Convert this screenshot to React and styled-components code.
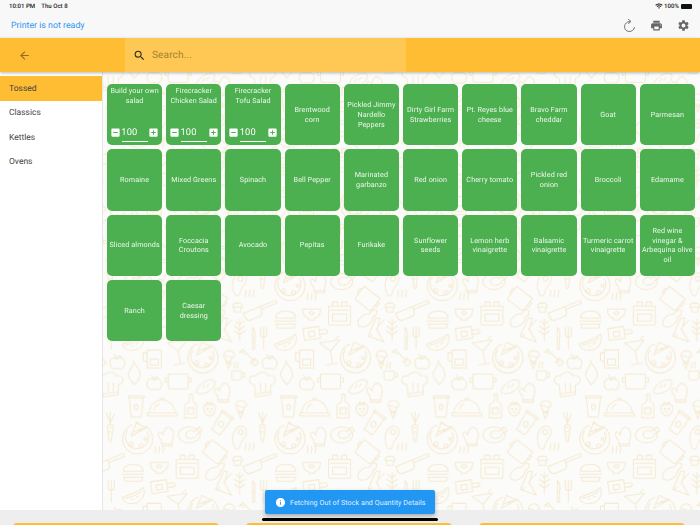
import React from "react";
import styled, { createGlobalStyle } from "styled-components";
import { MdPrint, MdSettings, MdSearch, MdArrowBack, MdInfo, MdWifi, MdIndeterminateCheckBox, MdAddBox } from "react-icons/md";

const Global = createGlobalStyle`
  html, body { margin: 0; padding: 0; background: #fff; }
  * { box-sizing: border-box; }
  body { font-family: Roboto, "Noto Sans", sans-serif; text-rendering: geometricPrecision; }
`;

const Page = styled.div`
  position: relative; width: 700px; height: 525px; overflow: hidden;
  display: flex; flex-direction: column; background: #fff;
`;
const Header = styled.header`
  background: #f8f8f8; height: 38px; display: flex; flex-direction: column;
`;
const StatusBar = styled.div`
  height: 13px; display: flex; align-items: center; justify-content: space-between;
  padding: 0 8px 1px 9px; font-size: 6.1px; font-weight: 500; color: #222;
`;
const StatusGroup = styled.div`
  display: flex; align-items: center; gap: ${p => p.$gap || 6}px;
`;
const Battery = styled.span`
  display: block; width: 11px; height: 5px; background: #111; border-radius: 1px; margin-left: 1px;
`;
const TitleRow = styled.div`
  flex: 1; display: flex; align-items: center; justify-content: space-between; padding: 0 10px 0 11px;
`;
const PrinterStatus = styled.span`
  font-size: 8.8px; color: #2f96f3;
`;
const ActionGroup = styled.div`
  display: flex; align-items: center; gap: 14px; color: #666;
`;
const Toolbar = styled.div`
  position: relative; z-index: 3; height: 34px; background: #ffbd33; display: flex; align-items: stretch;
  box-shadow: 0 1px 3px rgba(0,0,0,.28);
`;
const BackSlot = styled.div`
  width: 125px; padding-left: 18px; display: flex; align-items: center; color: #8f6d22;
`;
const SearchBox = styled.div`
  width: 281px; background: #ffc854; display: flex; align-items: center; padding-left: 8px; gap: 6px;
  color: #2e2a20;
`;
const Placeholder = styled.span`
  font-size: 10.1px; letter-spacing: .1px; color: #a4842f;
`;
const Body = styled.div`
  flex: 1; display: flex; min-height: 0;
`;
const Sidebar = styled.nav`
  width: 103px; background: #fff; border-right: 1px solid #e6e6e6; padding-top: 4px;
  display: flex; flex-direction: column;
`;
const NavItem = styled.div`
  height: 24.5px; display: flex; align-items: center; padding: 1px 0 0 9px; font-size: 8.5px;
  color: #444; background: ${p => (p.$active ? "#ffbd33" : "transparent")};
`;
const Content = styled.main`
  position: relative; flex: 1; background: #fbfbf9; padding: 12px 5px 0 4px; overflow: hidden;
`;
const PatternLayer = styled.svg`
  position: absolute; inset: 0; width: 100%; height: 100%;
`;
const Grid = styled.div`
  position: relative; display: grid; grid-template-columns: repeat(10, 1fr);
  grid-auto-rows: 61.3px; gap: 4px; will-change: transform;
`;
const Card = styled.div`
  background: #4caf50; border-radius: 5px; color: rgba(255,255,255,.9);
  font-size: 7.2px; line-height: 9.7px; letter-spacing: .1px; text-align: center;
  padding: ${p => (p.$qty ? "2px 1.85px 3px" : "0 1.85px")};
  display: flex; flex-direction: column; align-items: center;
  justify-content: ${p => (p.$qty ? "flex-start" : "center")};
`;
const QtyRow = styled.div`
  margin-top: auto; width: 100%; display: flex; align-items: center; padding: 0 1px; color: #fff;
`;
const QtyValue = styled.span`
  flex: 1; text-align: left; font-size: 9.3px; line-height: 11px; padding-left: .5px;
`;
const QtyLine = styled.div`
  width: 26px; height: 1px; background: #fff; margin: 3px 0 0 0;
`;
const Footer = styled.footer`
  height: 15px; background: #eeeeee; display: flex; justify-content: space-between; padding: 13px 15px 0 13px;
  overflow: hidden;
`;
const FooterButton = styled.div`
  width: 206px; height: 8px; border-radius: 4px; background: #ffbd33;
`;
const Toast = styled.div`
  position: absolute; z-index: 4; left: 265px; top: 490px; width: 170px; height: 24px; border-radius: 2px;
  background: #2196f3; color: rgba(255,255,255,.9); display: flex; align-items: center; gap: 4px;
  padding-left: 10px; font-size: 7.1px; letter-spacing: .06px; white-space: nowrap; box-shadow: 0 2px 4px rgba(0,0,0,.3);
`;
const HomeBar = styled.div`
  position: absolute; z-index: 5; left: 262px; top: 518px; width: 176px; height: 3px; border-radius: 2px; background: #000;
`;

const W = 152.4, H = 153.3;
const Doodle = {
  pizza: <g><path d="M-5-13A15 15 0 1 0 8-12"/><path d="M-10-7A11.5 11.5 0 1 0 10-6"/><path d="M-6-2L-1-15 9-10Z"/><path d="M-4-6L7-10"/><circle cx="-6" cy="6" r="2"/><circle cx="4" cy="8" r="2"/><circle cx="2" cy="-8" r=".8"/><circle cx="8" cy="1" r="1.4"/></g>,
  cone: <g><path d="M-5-1A5.5 5.5 0 1 1 6-1Q3 1 0-.5T-5-1Z"/><path d="M-4 0L0 12 4 0M-3 3L3 7M3 3L-2 7"/></g>,
  peeler: <g><path d="M-7-7L-3-4M-5-9L7 4M-8-5L-5-8M3 4L7 0 11 5 7 8Z"/></g>,
  apple: <g><path d="M0-3C-8-7-8 2-6 5-4 8-2 7 0 6 3 7 5 8 7 4 9-1 5-6 0-3Z"/><path d="M0-3L-3-8M0-5Q3-7 4-5"/></g>,
  lemon: <g><path d="M0-10C-3-5-6-2-6 2-5 7-1 9 0 12 2 9 6 6 6 2 6-3 3-6 0-10Z"/><path d="M0-10L-1-13"/></g>,
  mug: <g><path d="M-6-3H4V3Q4 6 1 6H-3Q-6 6-6 3ZM4-1H7V3H4"/><path d="M-3-6Q-4-8-3-9T-3-12M0-6Q-1-8 0-9T0-12"/></g>,
  hat: <g><path d="M-7 10L-8-2C-16-4-14-13-7-11-4-16 4-16 6-11 13-13 16-5 8-2L8 8Z"/><path d="M-7 7L8 5M-2 4V-4M3 4V-4"/></g>,
  pot: <g><path d="M-10-7H9Q10-7 10-5V5Q10 8 7 8H-7Q-10 8-10 5ZM-10-3H-13V1H-10M10-3H13V1H10"/></g>,
  bread: <g><path d="M-9 3C-5-5 3-8 7-7 11-6 9 0 5 3 0 7-11 9-9 3Z"/><path d="M-3 1L-1-2M1 0L3-3"/></g>,
  mitt: <g><path d="M-5 9L-6 3C-9 0-10-4-8-5-6-5-5-3-4-2-4-8 0-11 3-9 7-7 7 1 5 3L5 9ZM-5 7H5"/></g>,
  bottle: <g><path d="M-1-13H2V-6C5-4 6-3 6-1V11H-6V-1C-6-3-3-4-1-6Z"/><path d="M-3 1H3V7H-3Z"/></g>,
  berry: <g><path d="M-5-3C-8 2-3 8 0 8 3 8 8 2 5-3 3-4-3-4-5-3Z"/><path d="M-4-3L-2-6 0-4 2-6 4-3"/><circle cx="-2" cy="1" r=".7"/><circle cx="2" cy="1" r=".7"/><path d="M-1 4Q0 5 1 4"/></g>,
  cup: <g><path d="M-7-9H7L5 10H-5ZM-8-11H8V-9H-8Z"/><path d="M-2 0A2 2.500 0 1 0 2 0A2 2.500 0 1 0-2 0Z"/></g>,
  cloche: <g><path d="M-13 6C-12-4-5-7 0-7 5-7 12-4 13 6ZM-15 6H15V9H-15ZM-2-7A2 2 0 1 1 2-7"/><path d="M-8 2Q-6-2-3-3"/></g>,
  tiltcup: <g transform="rotate(35)"><path d="M-6-9H6L5 10H-5ZM-7-11H7V-9H-7Z"/><circle cx="0" cy="1" r="2.400"/></g>,
  carrot: <g><path d="M-3-2Q0-5 3-2L1 13Q0 15-1 13Z"/><path d="M0-4L-4-14M0-4V-15M0-4L4-13M-1-1L1 0M-2 4L1 4"/></g>,
  turkey: <g><ellipse cx="-2" cy="2" rx="11" ry="8"/><path d="M-5 3C-7-2 1-4 3-1L8-6 10-4 11-2 6 1C5 6-3 7-5 3Z"/></g>,
  meat: <g><path d="M-5 10C-9 2-7-9 1-11 7-11 8-5 6-1 4 2 1 4 0 10-1 13-4 13-5 10Z"/><circle cx="1" cy="-5" r="2.500"/></g>,
  pan: <g transform="rotate(-22)"><path d="M-11-3H7V1Q7 6 2 6H-6Q-11 6-11 1ZM7-3H24V0H7"/></g>,
  steam: <g><path d="M-4-6Q-5-8-4-9T-4-13M0-6Q-1-8 0-9T0-13M4-6Q3-8 4-9T4-13"/></g>,
  box: <g transform="rotate(38)"><path d="M-10-7H10V7Q10 9 8 9H-8Q-10 9-10 7ZM-10-3H-12V2H-10M10-3H12V2H10"/></g>,
  cupcake: <g><path d="M-4 0L-3 5H3L4 0M-5 0Q-5-4 0-4 5-4 5 0Z"/></g>,
  bowl: <g><path d="M-9-3H9C9 4 5 6 3 6V8H-3V6C-5 6-9 4-9-3Z"/><ellipse cx="0" cy="1" rx="2.500" ry="1.500"/></g>,
  burger: <g><path d="M-10-2C-10-8-4-9 0-9 4-9 10-8 10-2ZM-11 1H11M-10 4H10M-9 4V7Q-9 8-7 8H7Q9 8 9 7V4"/></g>,
  oven: <g><path d="M-11-7H11V10Q11 12 9 12H-9Q-11 12-11 10ZM-9-3H9M-7 1H7V8H-7ZM-7-11H-2V-7H-7ZM2-11H7V-7H2Z"/></g>,
  stick: <g><path d="M-10 4C-11-1-4-7 1-6L6-11 9-9 8-5 5-3C5 2-1 7-5 7-8 7-10 6-10 4Z"/></g>,
  leg: <g><path d="M-2-12L2-12-1 0 6 12-10 6Z M-9 7L-6 4M-2 -1L6 -10"/></g>,
  leaf: <g><path d="M0-11V11M0-5L-4-9M0-5L4-9M0 0L-5-4M0 0L5-4M0 5L-5 1M0 5L5 1"/></g>,
  knife: <g><path d="M-1-11C2-8 2-2 1 1H-1ZM-1 1V11H1V1"/></g>,
  fork: <g><path d="M-3-11V-3Q-3-1 0-1 3-1 3-3V-11M0-11V11"/></g>,
  board: <g transform="rotate(-8)"><path d="M-11-6H5V6H-11ZM5-2H10Q13-2 13 0T10 2H5M-6-2H0V3H-6Z"/></g>,
  melon: <g><path d="M-11 2C-6 0 5-3 10-8 13 0 8 7 1 8-5 9-10 7-11 2Z"/><path d="M-8 3C-3 2 3 0 8-4M-2 4L0 4M3 2L5 1"/></g>,
  martini: <g><path d="M-10-10L10-13 1-2ZM1-2L3 11M-3 12L8 10M6-14L9-17"/></g>,
  jug: <g><path d="M-6-8H8V10H-6ZM-6-5H-10V2L-6 4M-3 1H5V7H-3Z"/></g>,
};
const items = [
  ["cupcake",50,37],["box",28,28],["pan",67,42],["steam",62,33],["bowl",124,42],["steam",124,36],["burger",98,50],["oven",152,43],
  ["stick",28,50],["leg",38,60],["leaf",52,60],["knife",66,68],["fork",76,68],["board",127,63],["melon",98,72],["martini",142,83],
  ["jug",118,88],["pizza",15,87],["cone",41,87],["peeler",60,88],["apple",82,92],["lemon",99,103],["mug",50,104],["hat",75,117],
  ["apple",119,113],["pot",143,111],["bread",18,117],["mitt",36,123],["bottle",3,137],["berry",22,138],["cone",53,137],["cup",101,137],
  ["cloche",127,137],["tiltcup",34,153],["carrot",75,158],["pizza",102,168],["mitt",132,167],["turkey",156,163],["meat",52,167],
].map(([k,x,y]) => [k, x, y % H]);

function Tile() {
  const shifts = [-W, 0, W];
  return (
    <g fill="none" stroke="#f5ead2" strokeWidth="1.05" strokeLinecap="round" strokeLinejoin="round">
      {shifts.flatMap(dx => shifts.flatMap(dy => items.map(([k, x, y], i) => (
        <g key={`${dx}${dy}${i}`} transform={`translate(${x + dx} ${y + dy})`}>{Doodle[k]}</g>
      ))))}
    </g>
  );
}

function RefreshIcon() {
  return (
    <svg width="13" height="14" viewBox="0 0 13 14" fill="none" stroke="#666" strokeWidth="0.9" strokeLinecap="round">
      <path d="M6.500 2.500A5 5 0 1 0 11.500 8.500" />
      <path d="M5.500 .5L8 2.500 5.500 4.500" />
    </svg>
  );
}

const rows = [
  "Build your own salad","Firecracker Chicken Salad","Firecracker Tofu Salad","Brentwood corn","Pickled Jimmy Nardello Peppers","Dirty Girl Farm Strawberries","Pt. Reyes blue cheese","Bravo Farm cheddar","Goat","Parmesan",
  "Romaine","Mixed Greens","Spinach","Bell Pepper","Marinated garbanzo","Red onion","Cherry tomato","Pickled red onion","Broccoli","Edamame",
  "Sliced almonds","Foccacia Croutons","Avocado","Pepitas","Furikake","Sunflower seeds","Lemon herb vinaigrette","Balsamic vinaigrette","Turmeric carrot vinaigrette","Red wine vinegar & Arbequina olive oil",
  "Ranch","Caesar dressing",
];

export default function App() {
  return (
    <Page>
      <Global />
      <Header>
        <StatusBar>
          <StatusGroup $gap={6}><span>10:01 PM</span><span>Thu Oct 8</span></StatusGroup>
          <StatusGroup $gap={1}><MdWifi size={8} color="#222" /><span>100%</span><Battery /></StatusGroup>
        </StatusBar>
        <TitleRow>
          <PrinterStatus>Printer is not ready</PrinterStatus>
          <ActionGroup>
            <RefreshIcon />
            <MdPrint size={13} />
            <MdSettings size={13} />
          </ActionGroup>
        </TitleRow>
      </Header>
      <Toolbar>
        <BackSlot><MdArrowBack size={13} /></BackSlot>
        <SearchBox><MdSearch size={13} /><Placeholder>Search...</Placeholder></SearchBox>
      </Toolbar>
      <Body>
        <Sidebar>
          <NavItem $active>Tossed</NavItem>
          <NavItem>Classics</NavItem>
          <NavItem>Kettles</NavItem>
          <NavItem>Ovens</NavItem>
        </Sidebar>
        <Content>
          <PatternLayer aria-hidden="true">
            <defs>
              <pattern id="food" patternUnits="userSpaceOnUse" x="237" y="198" width={W} height={H}>
                <Tile />
              </pattern>
            </defs>
            <rect width="100%" height="100%" fill="url(#food)" />
          </PatternLayer>
          <Grid>
            {rows.map((name, i) => (
              <Card key={name} $qty={i < 3}>
                {name}
                {i < 3 && (
                  <>
                    <QtyRow>
                      <MdIndeterminateCheckBox size={11} />
                      <QtyValue>100</QtyValue>
                      <MdAddBox size={11} />
                    </QtyRow>
                    <QtyLine />
                  </>
                )}
              </Card>
            ))}
          </Grid>
        </Content>
      </Body>
      <Footer>
        <FooterButton /><FooterButton /><FooterButton />
      </Footer>
      <Toast><MdInfo size={11} color="#fff" />Fetching Out of Stock and Quantity Details</Toast>
      <HomeBar />
    </Page>
  );
}
